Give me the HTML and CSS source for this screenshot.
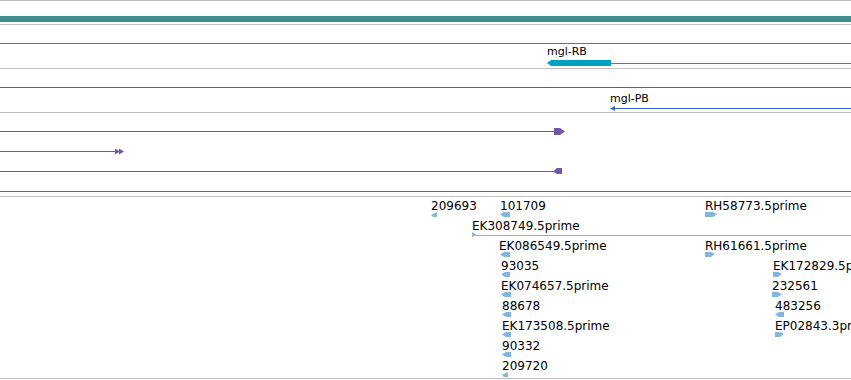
FILE: index.html
```html
<!DOCTYPE html>
<html>
    <head>
        <link rel="stylesheet" href="styles.css">
    </head>
<body>
<div class="view">
    <div class="track overview">
        <div class="overview-bar"></div>
    </div>

    <div class="track genes">
        <div class="span-line teal" style="top:18px"></div>
        <div class="feature" style="left:547px;top:20px">
            <span class="label gene">mgl-RB</span>
            <svg class="glyph" width="304" height="6" viewBox="0 0 304 6">
                <polygon class="fill-cyan" points="0,3 4,0 64,0 64,6 4,6"/>
                <rect class="fill-cyan" x="64" y="3" width="240" height="1"/>
            </svg>
        </div>
    </div>

    <div class="track genes">
        <div class="span-line blue" style="top:18px"></div>
        <div class="feature" style="left:610px;top:23px">
            <span class="label gene">mgl-PB</span>
            <svg class="glyph pb" width="241" height="5" viewBox="0 0 241 5">
                <polygon class="fill-blue" points="0,2.5 5,0 5,5"/>
                <rect class="fill-blue" x="4" y="2" width="237" height="1"/>
            </svg>
        </div>
    </div>

    <div class="track transcripts">
        <!-- forward, ends at 565 -->
        <svg class="row" style="top:15px" width="851" height="7" viewBox="0 0 851 7">
            <rect class="fill-purple" x="0" y="3" width="556" height="1"/>
            <polygon class="fill-purple" points="554,0 560,0 565,3.5 560,7 554,7"/>
        </svg>
        <svg class="row" style="top:35px" width="851" height="7" viewBox="0 0 851 7">
            <rect class="fill-purple" x="0" y="3" width="116" height="1"/>
            <polygon class="fill-purple" points="115,0.5 120,3.5 115,6.5"/>
            <polygon class="fill-purple" points="119,0.5 124,3.5 119,6.5"/>
        </svg>
        <svg class="row" style="top:55px" width="851" height="7" viewBox="0 0 851 7">
            <rect class="fill-purple" x="0" y="3" width="554" height="1"/>
            <polygon class="fill-purple" points="553,3.5 557,0 562,0 562,6 557,6"/>
        </svg>
        <div class="span-line purple" style="top:78px"></div>
    </div>

    <div class="track ests">
        <div class="feature" style="left:431px;top:2px">
            <span class="label">209693</span>
            <svg class="glyph" width="6" height="5"><polygon class="fill-est" points="0,3 6,0 6,5 2,5"/></svg>
        </div>
        <div class="feature" style="left:500px;top:2px">
            <span class="label">101709</span>
            <svg class="glyph" width="10" height="5"><polygon class="fill-est" points="0,2.5 4,0 10,0 10,5 4,5"/></svg>
        </div>
        <div class="feature" style="left:705px;top:2px">
            <span class="label">RH58773.5prime</span>
            <svg class="glyph" width="12" height="5"><polygon class="fill-est" points="0,0 8,0 12,2 8,5 0,5"/></svg>
        </div>

        <div class="feature" style="left:472px;top:22px">
            <span class="label">EK308749.5prime</span>
            <svg class="glyph" width="379" height="5">
                <polygon class="fill-est" points="0,0 5,3 0,5"/>
                <rect class="fill-est" x="4" y="3" width="375" height="1"/>
            </svg>
        </div>

        <div class="feature" style="left:499px;top:42px">
            <span class="label">EK086549.5prime</span>
            <svg class="glyph pad1" width="10" height="5"><polygon class="fill-est" points="0,2.5 4,0 10,0 10,5 4,5"/></svg>
        </div>
        <div class="feature" style="left:705px;top:42px">
            <span class="label">RH61661.5prime</span>
            <svg class="glyph" width="10" height="5"><polygon class="fill-est" points="0,0 6,0 10,2 6,5 0,5"/></svg>
        </div>

        <div class="feature" style="left:501px;top:62px">
            <span class="label">93035</span>
            <svg class="glyph" width="9" height="5"><polygon class="fill-est" points="0,2.5 4,0 9,0 9,5 4,5"/></svg>
        </div>
        <div class="feature" style="left:773px;top:62px">
            <span class="label">EK172829.5prime</span>
            <svg class="glyph" width="9" height="5"><polygon class="fill-est" points="0,0 5,0 9,2 5,5 0,5"/></svg>
        </div>

        <div class="feature" style="left:501px;top:82px">
            <span class="label">EK074657.5prime</span>
            <svg class="glyph" width="10" height="5"><polygon class="fill-est" points="0,2.5 4,0 10,0 10,5 4,5"/></svg>
        </div>
        <div class="feature" style="left:772px;top:82px">
            <span class="label">232561</span>
            <svg class="glyph" width="10" height="5"><polygon class="fill-est" points="0,0 6,0 10,2 6,5 0,5"/></svg>
        </div>

        <div class="feature" style="left:502px;top:102px">
            <span class="label">88678</span>
            <svg class="glyph" width="9" height="5"><polygon class="fill-est" points="0,2.5 4,0 9,0 9,5 4,5"/></svg>
        </div>
        <div class="feature" style="left:775px;top:102px">
            <span class="label">483256</span>
            <svg class="glyph" width="9" height="5"><polygon class="fill-est" points="0,2.5 4,0 9,0 9,5 4,5"/></svg>
        </div>

        <div class="feature" style="left:502px;top:122px">
            <span class="label">EK173508.5prime</span>
            <svg class="glyph" width="9" height="5"><polygon class="fill-est" points="0,2.5 4,0 9,0 9,5 4,5"/></svg>
        </div>
        <div class="feature" style="left:775px;top:122px">
            <span class="label">EP02843.3prime</span>
            <svg class="glyph" width="9" height="5"><polygon class="fill-est" points="0,0 5,0 9,2 5,5 0,5"/></svg>
        </div>

        <div class="feature" style="left:502px;top:142px">
            <span class="label">90332</span>
            <svg class="glyph" width="9" height="5"><polygon class="fill-est" points="0,2.5 4,0 9,0 9,5 4,5"/></svg>
        </div>

        <div class="feature" style="left:502px;top:162px">
            <span class="label">209720</span>
            <svg class="glyph" width="6" height="5"><polygon class="fill-est" points="0,3 6,0 6,5 2,5"/></svg>
        </div>
    </div>
</div>
</body>
</html>
```

FILE: styles.css
```css
:root {
    --track-border: #c0c0c0;
    --overview-teal: #3f8f8f;
    --gene-teal: #1f8fae;
    --gene-cyan: #00a0c2;
    --gene-blue: #3568c6;
    --tx-purple: #7256a8;
    --est-blue: #84b6dc;
}

html, body {
    margin: 0;
    padding: 0;
    background: #fff;
}

body {
    width: 851px;
    height: 380px;
    overflow: hidden;
    font-family: 'DejaVu Sans', 'Noto Sans', sans-serif;
    color: #000;
}

.view {
    display: flex;
    flex-direction: column;
}

.track {
    position: relative;
    border-bottom: 1px solid var(--track-border);
    overflow: hidden;
}

.overview {
    height: 23px;
    border-top: 1px solid var(--track-border);
}

.overview-bar {
    margin-top: 15px;
    height: 6px;
    background: var(--overview-teal);
}

.genes {
    height: 43px;
}

.transcripts {
    height: 83px;
}

.ests {
    height: 181px;
}

/* full-width feature lines */
.span-line {
    position: absolute;
    left: 0;
    right: 0;
    height: 1px;
}

.span-line.teal { background: var(--gene-teal); }
.span-line.blue { background: var(--gene-blue); }
.span-line.purple { background: var(--tx-purple); }

.row {
    position: absolute;
    left: 0;
    display: block;
}

.feature {
    position: absolute;
    display: flex;
    flex-direction: column;
    align-items: flex-start;
    white-space: nowrap;
}

.label {
    font-size: 12px;
    line-height: 14px;
}

.label.gene {
    font-size: 11px;
    line-height: 13px;
}

.glyph {
    display: block;
    margin-top: -1px;
}

.genes .glyph {
    margin-top: 2px;
}

.genes .glyph.pb {
    margin-top: 1px;
}

.glyph.pad1 {
    margin-left: 1px;
}

.fill-cyan { fill: var(--gene-cyan); }
.fill-blue { fill: var(--gene-blue); }
.fill-purple { fill: var(--tx-purple); }
.fill-est { fill: var(--est-blue); }
```
